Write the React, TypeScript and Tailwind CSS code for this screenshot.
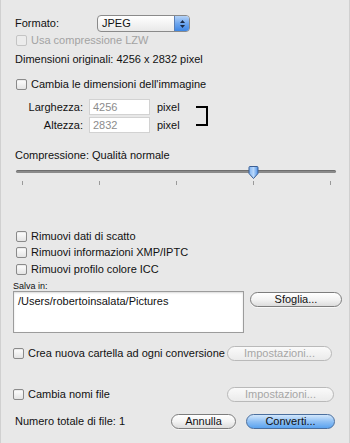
import React from "react";

function Check({ label, disabled = false }: { label: string; disabled?: boolean }) {
  return (
    <div className="flex items-center gap-[4px]">
      <span
        className={
          disabled
            ? "h-[11px] w-[11px] rounded-[2px] border border-[#c4c4c4] bg-[#ececec]"
            : "h-[11px] w-[11px] rounded-[2px] border border-[#8a8a8a] bg-gradient-to-b from-white to-[#e4e4e4] shadow-[inset_0_1px_1px_rgba(0,0,0,0.08)]"
        }
      />
      <span className={disabled ? "text-[#a3a3a3]" : "text-[#111]"}>{label}</span>
    </div>
  );
}

function AquaButton({
  label,
  width,
  disabled = false,
  primary = false,
}: {
  label: string;
  width: string;
  disabled?: boolean;
  primary?: boolean;
}) {
  let cls =
    "flex h-[15px] items-center justify-center rounded-full border border-[#7d7d7d] bg-gradient-to-b from-white via-[#f3f3f3] to-[#dcdcdc] text-[#111] shadow-[0_1px_0_rgba(255,255,255,0.7)]";
  if (disabled)
    cls =
      "flex h-[15px] items-center justify-center rounded-full border border-[#b9b9b9] bg-gradient-to-b from-[#fafafa] to-[#ebebeb] text-[#a6a6a6]";
  if (primary)
    cls =
      "flex h-[15px] items-center justify-center rounded-full border border-[#4b6f9e] bg-gradient-to-b from-[#d3e7fb] via-[#8fc0f4] to-[#5aa3ef] text-[#111]";
  return <div className={`${cls} ${width}`}>{label}</div>;
}

export default function App() {
  const ticks = [6, 83, 160, 237, 314];
  return (
    <div
      className="flex h-[443px] w-[350px] flex-col overflow-hidden border-x border-[#d0d0d0] bg-[#e8e8e8] text-[11px] leading-none text-[#111]"
      style={{ fontFamily: '"Lucida Grande", "Liberation Sans", Arial, sans-serif' }}
    >
      {/* formato */}
      <div className="mt-[15px] flex h-[17px] items-center pl-[14px]">
        <span className="w-[82px]">Formato:</span>
        <div className="flex h-[17px] w-[93px] overflow-hidden rounded-[4px] border border-[#8a8a8a] bg-gradient-to-b from-white to-[#e9e9e9]">
          <span className="flex flex-1 items-center pl-[4px]">JPEG</span>
          <span className="flex w-[15px] flex-col items-center justify-center gap-[2px] border-l border-[#5a7fb5] bg-gradient-to-b from-[#b4d2f7] via-[#6ea6ee] to-[#3d86e4]">
            <svg width="5" height="3" viewBox="0 0 5 3">
              <path d="M0 3 L2.5 0 L5 3 Z" fill="#1b2a44" />
            </svg>
            <svg width="5" height="3" viewBox="0 0 5 3">
              <path d="M0 0 L2.5 3 L5 0 Z" fill="#1b2a44" />
            </svg>
          </span>
        </div>
      </div>

      <div className="mt-[2px] flex h-[12px] items-center pl-[15px]">
        <Check label="Usa compressione LZW" disabled />
      </div>

      <div className="mt-[7px] flex h-[13px] items-center pl-[14px]">Dimensioni originali: 4256 x 2832 pixel</div>

      <div className="mt-[12px] flex h-[12px] items-center pl-[15px]">
        <Check label="Cambia le dimensioni dell'immagine" />
      </div>

      {/* size */}
      <div className="mt-[9px] flex h-[34px] items-center">
        <div className="flex flex-col gap-[2px]">
          {[
            ["Larghezza:", "4256"],
            ["Altezza:", "2832"],
          ].map(([l, v]) => (
            <div key={l} className="flex h-[16px] items-center">
              <span className="w-[82px] text-right">{l}</span>
              <span className="ml-[6px] flex h-[16px] w-[61px] items-center border border-[#d2d2d2] bg-white pl-[3px] text-[#8c8c8c]">
                {v}
              </span>
              <span className="ml-[7px]">pixel</span>
            </div>
          ))}
        </div>
        <div className="ml-[16px] h-[20px] w-[12px] border-y-2 border-r-2 border-black" />
      </div>

      <div className="mt-[16px] flex h-[13px] items-center pl-[14px]">Compressione: Qualità normale</div>

      {/* slider */}
      <div className="relative mt-[3px] ml-[15px] h-[22px] w-[320px]">
        <div className="absolute top-[5px] h-[3px] w-full rounded-full bg-[#8a8a8a] shadow-[inset_0_1px_0_rgba(0,0,0,0.2)]" />
        {ticks.map((x) => (
          <div key={x} className="absolute top-[16px] h-[4px] w-px bg-[#9a9a9a]" style={{ left: x }} />
        ))}
        <svg className="absolute left-[232px] top-[1px]" width="11" height="13" viewBox="0 0 11 13">
          <defs>
            <linearGradient id="th" x1="0" y1="0" x2="1" y2="0">
              <stop offset="0" stopColor="#7fb3f2" />
              <stop offset="0.5" stopColor="#b9d8fb" />
              <stop offset="1" stopColor="#4b8fe6" />
            </linearGradient>
          </defs>
          <path d="M1 1.5 Q1 0.5 2 0.5 L9 0.5 Q10 0.5 10 1.5 L10 7.5 L5.5 12.5 L1 7.5 Z" fill="url(#th)" stroke="#3b5f94" />
        </svg>
      </div>

      <div className="mt-[43px] flex h-[12px] items-center pl-[15px]">
        <Check label="Rimuovi dati di scatto" />
      </div>
      <div className="mt-[4px] flex h-[12px] items-center pl-[15px]">
        <Check label="Rimuovi informazioni XMP/IPTC" />
      </div>
      <div className="mt-[5px] flex h-[12px] items-center pl-[15px]">
        <Check label="Rimuovi profilo colore ICC" />
      </div>

      <div className="mt-[6px] flex h-[10px] items-center pl-[12px] text-[9px]">Salva in:</div>

      <div className="flex h-[42px] items-start pl-[12px]">
        <div className="h-[42px] w-[231px] border border-[#9c9c9c] bg-white pl-[4px] pt-[4px] shadow-[inset_0_1px_2px_rgba(0,0,0,0.15)]">
          /Users/robertoinsalata/Pictures
        </div>
        <div className="ml-[6px] mt-[1px]">
          <AquaButton label="Sfoglia..." width="w-[92px]" />
        </div>
      </div>

      <div className="mt-[13px] flex h-[14px] items-center justify-between pl-[12px] pr-[17px]">
        <Check label="Crea nuova cartella ad ogni conversione" />
        <AquaButton label="Impostazioni..." width="w-[105px]" disabled />
      </div>

      <div className="mt-[27px] flex h-[14px] items-center justify-between pl-[12px] pr-[15px]">
        <Check label="Cambia nomi file" />
        <AquaButton label="Impostazioni..." width="w-[107px]" disabled />
      </div>

      <div className="mt-[13px] flex h-[15px] items-center pl-[14px]">
        <span className="w-[156px]">Numero totale di file: 1</span>
        <AquaButton label="Annulla" width="w-[65px]" />
        <div className="ml-[10px]">
          <AquaButton label="Converti..." width="w-[89px]" primary />
        </div>
      </div>
    </div>
  );
}
